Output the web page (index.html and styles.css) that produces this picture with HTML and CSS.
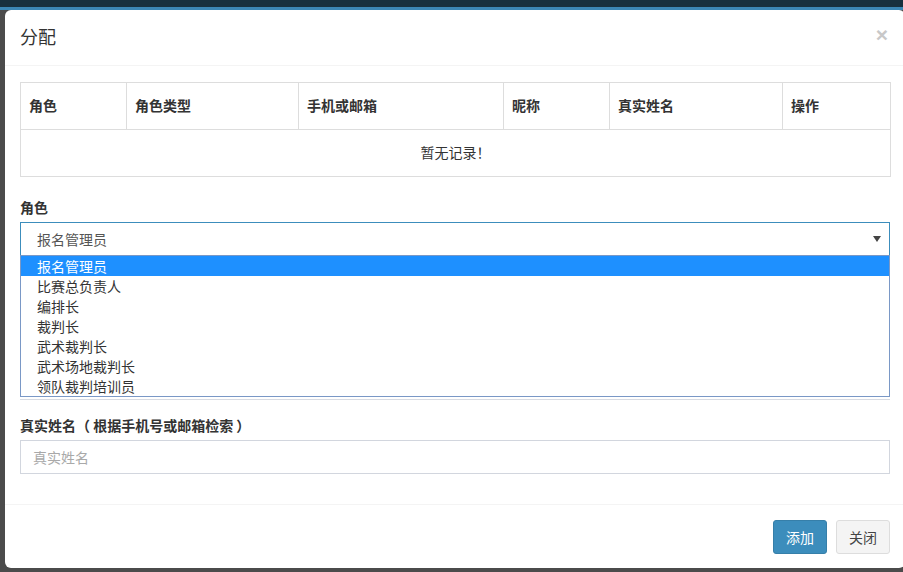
FILE: index.html
```html
<!DOCTYPE html>
<html lang="zh-CN">
<head>
<meta charset="utf-8">
<title>分配</title>
<link rel="stylesheet" href="styles.css">
</head>
<body>
<div class="backdrop">
  <div class="topbar"></div>
</div>
<div class="modal">
  <div class="modal-header">
    <h4 class="modal-title">分配</h4>
    <button class="close" type="button">×</button>
  </div>
  <div class="modal-body">
    <table class="table">
      <colgroup>
        <col class="c1"><col class="c2"><col class="c3"><col class="c4"><col class="c5"><col class="c6">
      </colgroup>
      <thead>
        <tr><th>角色</th><th>角色类型</th><th>手机或邮箱</th><th>昵称</th><th>真实姓名</th><th>操作</th></tr>
      </thead>
      <tbody>
        <tr><td colspan="6" class="empty">暂无记录！</td></tr>
      </tbody>
    </table>

    <div class="form-group">
      <label class="label">角色</label>
      <div class="select-wrap">
        <div class="select">
          <span>报名管理员</span>
          <span class="arrow"></span>
        </div>
        <ul class="options">
          <li class="active">报名管理员</li>
          <li>比赛总负责人</li>
          <li>编排长</li>
          <li>裁判长</li>
          <li>武术裁判长</li>
          <li>武术场地裁判长</li>
          <li>领队裁判培训员</li>
        </ul>
      </div>
    </div>

    <div class="form-group covered"></div>

    <div class="form-group">
      <label class="label">真实姓名（ 根据手机号或邮箱检索 ）</label>
      <input class="input" type="text" placeholder="真实姓名">
    </div>
  </div>
  <div class="modal-footer">
    <button class="btn btn-primary" type="button">添加</button>
    <button class="btn btn-default" type="button">关闭</button>
  </div>
</div>
</body>
</html>
```

FILE: styles.css
```css
* { box-sizing: border-box; }

html, body {
  margin: 0;
  padding: 0;
  width: 903px;
  height: 572px;
  overflow: hidden;
  background: #4b4b4b;
  font-family: "Noto Sans CJK SC", "Liberation Sans", sans-serif;
  font-size: 14px;
  line-height: 20px;
  color: #333;
}

.backdrop {
  height: 572px;
  background: #4b4b4b;
}

.topbar {
  height: 10px;
  background: #17303f;
  border-bottom: 3px solid #3b87b6;
}

.modal {
  position: absolute;
  left: 5px;
  top: 10px;
  width: 900px;
  height: 558px;
  background: #fff;
  border-radius: 6px;
  display: flex;
  flex-direction: column;
}

.modal-header {
  display: flex;
  align-items: center;
  justify-content: space-between;
  padding: 13px 15px 17px 15px;
  height: 56px;
  border-bottom: 1px solid #f4f4f4;
}

.modal-title {
  margin: 0;
  font-size: 18px;
  font-weight: normal;
  line-height: 26px;
  color: #333;
}

.close {
  border: 0;
  background: none;
  padding: 0;
  margin: -2px 2px 0 0;
  font-family: "Liberation Sans", sans-serif;
  font-size: 21px;
  font-weight: bold;
  line-height: 1;
  color: #c8c8c8;
  cursor: pointer;
}

.modal-body {
  padding: 16px 15px 15px 15px;
}

.table {
  width: 870px;
  border-collapse: collapse;
  table-layout: fixed;
  margin-bottom: 20px;
}

.c1 { width: 106px; }
.c2 { width: 172px; }
.c3 { width: 205px; }
.c4 { width: 106px; }
.c5 { width: 173px; }
.c6 { width: 108px; }

.table th,
.table td {
  border: 1px solid #ddd;
  padding: 12px 8px 14px 8px;
  line-height: 20px;
  text-align: left;
  vertical-align: middle;
}

.table th {
  font-weight: bold;
  color: #333;
}

.table td.empty {
  text-align: center;
  color: #333;
}

.form-group {
  margin-bottom: 15px;
}

.label {
  display: block;
  font-weight: bold;
  margin-bottom: 5px;
  line-height: 20px;
  color: #333;
}

.select-wrap {
  position: relative;
}

.select {
  height: 34px;
  border: 1px solid #3c8dbc;
  padding: 0 8px 0 16px;
  display: flex;
  align-items: center;
  justify-content: space-between;
  color: #555;
}

.arrow {
  width: 0;
  height: 0;
  border-left: 4px solid transparent;
  border-right: 4px solid transparent;
  border-top: 6px solid #444;
}

.options {
  position: absolute;
  left: 0;
  right: 0;
  top: 33px;
  margin: 0;
  padding: 0;
  list-style: none;
  background: #fff;
  border: 1px solid #7a98c6;
  z-index: 5;
}

.options li {
  height: 20px;
  line-height: 20px;
  padding-left: 16px;
  color: #333;
}

.options li.active {
  background: #1e90ff;
  color: #fff;
}

.covered {
  height: 129px;
  border-bottom: 1px solid #d8dbe2;
}

.input {
  display: block;
  width: 100%;
  height: 34px;
  border: 1px solid #d2d6de;
  padding: 0 12px;
  font-family: "Noto Sans CJK SC", "Liberation Sans", sans-serif;
  font-size: 14px;
  color: #555;
  outline: none;
}

.input::placeholder {
  color: #a9a9a9;
}

.modal-footer {
  border-top: 1px solid #f4f4f4;
  padding: 15px;
  display: flex;
  justify-content: flex-end;
  gap: 9px;
}

.btn {
  height: 34px;
  padding: 0 12px;
  font-family: "Noto Sans CJK SC", "Liberation Sans", sans-serif;
  font-size: 14px;
  line-height: 20px;
  border-radius: 3px;
  border: 1px solid transparent;
  cursor: pointer;
}

.btn-primary {
  background: #3c8dbc;
  border-color: #367fa9;
  color: #fff;
}

.btn-default {
  background: #f4f4f4;
  border-color: #ddd;
  color: #444;
}
```
